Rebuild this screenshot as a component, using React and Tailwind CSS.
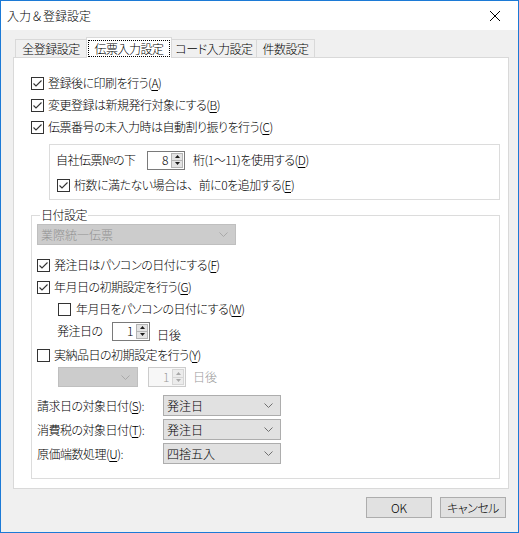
import React from 'react';

const FONT = "font-['Noto_Sans_CJK_JP','Noto_Sans_CJK_SC',sans-serif]";

function Check({ checked }) {
  return (
    <span className="w-[13px] h-[13px] border border-[#333333] bg-white flex items-center justify-center shrink-0">
      {checked && (
        <svg width="11" height="11" viewBox="0 0 11 11">
          <path d="M1.5 5.5 L4 8 L9.5 2.5" fill="none" stroke="#333333" strokeWidth="1.1" />
        </svg>
      )}
    </span>
  );
}

function M({ c }) {
  return <span className="underline underline-offset-[2px]">{c}</span>;
}

function Chevron({ color }) {
  return (
    <svg width="9" height="5" viewBox="0 0 9 5" className="shrink-0">
      <path d="M0.5 0.5 L4.5 4.5 L8.5 0.5" fill="none" stroke={color} strokeWidth="1" />
    </svg>
  );
}

function Spin({ value, disabled, h }) {
  const arrow = disabled ? '#a8a8a8' : '#1a1a1a';
  return (
    <div
      className={`w-[38px] ${h === 20 ? 'h-[20px]' : 'h-[19px]'} border shrink-0 flex ${
        disabled ? 'border-[#cccccc] bg-[#f7f7f7] text-[#9a9a9a]' : 'border-[#7a7a7a] bg-white'
      }`}
    >
      <span className="flex-1 text-right pr-[3px] flex items-center justify-end">{value}</span>
      <div className={`w-[12px] flex flex-col my-[1px] mr-[1px] border ${disabled ? 'border-[#d6d6d6]' : 'border-[#b4b4b4]'}`}>
        <span className={`flex-1 flex items-center justify-center border-b ${disabled ? 'bg-[#ececec] border-[#d6d6d6]' : 'bg-[#e3e3e3] border-[#b4b4b4]'}`}>
          <svg width="5" height="3" viewBox="0 0 5 3">
            <polygon points="0,3 2.5,0 5,3" fill={arrow} />
          </svg>
        </span>
        <span className={`flex-1 flex items-center justify-center ${disabled ? 'bg-[#ececec]' : 'bg-[#e3e3e3]'}`}>
          <svg width="5" height="3" viewBox="0 0 5 3">
            <polygon points="0,0 2.5,3 5,0" fill={arrow} />
          </svg>
        </span>
      </div>
    </div>
  );
}

function Combo({ text, disabled, w, h }) {
  return (
    <div
      className={`${w} ${h} border flex items-center justify-between pl-[3px] pr-[7px] shrink-0 ${
        disabled ? 'bg-[#cccccc] border-[#bfbfbf] text-[#929292]' : 'bg-[#e1e1e1] border-[#adadad]'
      }`}
    >
      <span className="tracking-normal">{text}</span>
      <Chevron color={disabled ? '#a9a9a9' : '#707070'} />
    </div>
  );
}

function CheckRow({ checked, children, className = '' }) {
  return (
    <div className={`h-[22px] flex items-center gap-[4px] ${className}`}>
      <Check checked={checked} />
      <span>{children}</span>
    </div>
  );
}

export default function App() {
  return (
    <div
      className={`w-[519px] h-[533px] border border-[#1c7ad6] bg-[#f0f0f0] flex flex-col text-[12px] leading-[14px] tracking-[-0.5px] font-light text-black ${FONT} [font-feature-settings:'palt']`}
    >
      {/* Title bar */}
      <div className="h-[29px] bg-white flex items-center justify-between shrink-0">
        <span className="pl-[6px] tracking-normal [font-feature-settings:normal]">入力＆登録設定</span>
        <div className="w-[46px] h-[29px] flex items-center justify-center">
          <svg width="10" height="10" viewBox="0 0 10 10">
            <path d="M0 0 L10 10 M10 0 L0 10" stroke="#000" strokeWidth="1" />
          </svg>
        </div>
      </div>

      {/* Body */}
      <div className="flex-1 flex flex-col pl-[12px] pt-[7px]">
        {/* Tabs */}
        <div className="h-[21px] flex items-end pl-[2px] relative z-10">
          <div className="w-[71px] h-[18px] mb-[1px] border-l border-t border-[#d9d9d9] bg-[#f0f0f0] flex items-center justify-center">
            全登録設定
          </div>
          <div className="w-[86px] h-[21px] border-l border-t border-r border-[#d9d9d9] bg-white flex">
            <span className="flex-1 ml-[1px] mr-[1px] mt-[2px] mb-[1px] border border-dotted border-black flex items-center justify-center">
              伝票入力設定
            </span>
          </div>
          <div className="w-[85px] h-[18px] mb-[1px] border-t border-r border-[#d9d9d9] bg-[#f0f0f0] flex items-center justify-center">
            コード入力設定
          </div>
          <div className="w-[58px] h-[18px] mb-[1px] border-t border-r border-[#d9d9d9] bg-[#f0f0f0] flex items-center justify-center">
            件数設定
          </div>
        </div>

        {/* Panel */}
        <div className="w-[496px] h-[432px] -mt-[1px] border border-[#d9d9d9] bg-white flex flex-col">
          <div className="pt-[14px] pl-[17px] flex flex-col">
            <CheckRow checked>
              登録後に印刷を行う(<M c="A" />)
            </CheckRow>
            <CheckRow checked>
              変更登録は新規発行対象にする(<M c="B" />)
            </CheckRow>
            <CheckRow checked>
              伝票番号の未入力時は自動割り振りを行う(<M c="C" />)
            </CheckRow>
          </div>

          {/* Group 1 */}
          <div className="mt-[6px] ml-[35px] w-[451px] h-[56px] border border-[#dcdcdc] pl-[6px] pt-[5px] flex flex-col">
            <div className="h-[20px] flex items-center">
              <span className="w-[91px]">自社伝票№の下</span>
              <Spin value="8" />
              <span className="ml-[8px]">
                桁(1～11)を使用する(<M c="D" />)
              </span>
            </div>
            <div className="mt-[5px] h-[20px] flex items-center gap-[4px] pl-[1px]">
              <Check checked />
              <span>
                桁数に満たない場合は<span className="[font-feature-settings:normal]">、</span>前に0を追加する(<M c="E" />)
              </span>
            </div>
          </div>

          {/* Group 2 */}
          <fieldset className="mt-[8px] ml-[17px] w-[469px] border border-[#dcdcdc] pl-[5px] pb-[14px]">
            <legend className="ml-[3px] px-[1px] leading-[14px]">日付設定</legend>
            <div className="mt-[2px]">
              <Combo text="業際統一伝票" disabled w="w-[199px]" h="h-[21px]" />
            </div>
            <CheckRow checked className="mt-[9px]">
              発注日はパソコンの日付にする(<M c="F" />)
            </CheckRow>
            <CheckRow checked>
              年月日の初期設定を行う(<M c="G" />)
            </CheckRow>
            <CheckRow checked={false} className="pl-[21px] gap-[5px]">
              年月日をパソコンの日付にする(<M c="W" />)
            </CheckRow>
            <div className="h-[22px] flex items-center pl-[20px]">
              <span className="w-[55px]">発注日の</span>
              <Spin value="1" />
              <span className="ml-[7px] mt-[7px] tracking-normal">日後</span>
            </div>
            <CheckRow checked={false} className="mt-[2px]">
              実納品日の初期設定を行う(<M c="Y" />)
            </CheckRow>
            <div className="mt-[1px] h-[20px] flex items-center pl-[21px]">
              <Combo text="" disabled w="w-[80px]" h="h-[20px]" />
              <span className="ml-[10px]">
                <Spin value="1" disabled h={20} />
              </span>
              <span className="ml-[7px] text-[#9a9a9a] tracking-normal">日後</span>
            </div>
            <div className="mt-[8px] h-[21px] flex items-center">
              <span className="w-[126px]">
                請求日の対象日付(<M c="S" />):
              </span>
              <Combo text="発注日" w="w-[118px]" h="h-[21px]" />
            </div>
            <div className="mt-[3px] h-[21px] flex items-center">
              <span className="w-[126px]">
                消費税の対象日付(<M c="T" />):
              </span>
              <Combo text="発注日" w="w-[118px]" h="h-[21px]" />
            </div>
            <div className="mt-[3px] h-[21px] flex items-center">
              <span className="w-[126px]">
                原価端数処理(<M c="U" />):
              </span>
              <Combo text="四捨五入" w="w-[118px]" h="h-[21px]" />
            </div>
          </fieldset>
        </div>

        {/* Buttons */}
        <div className="mt-[8px] flex justify-end pr-[12px] gap-[8px]">
          <button className="w-[66px] h-[21px] bg-[#e1e1e1] border border-[#adadad] flex items-center justify-center tracking-normal">
            OK
          </button>
          <button className="w-[66px] h-[21px] bg-[#e1e1e1] border border-[#adadad] flex items-center justify-center">
            キャンセル
          </button>
        </div>
      </div>
    </div>
  );
}
